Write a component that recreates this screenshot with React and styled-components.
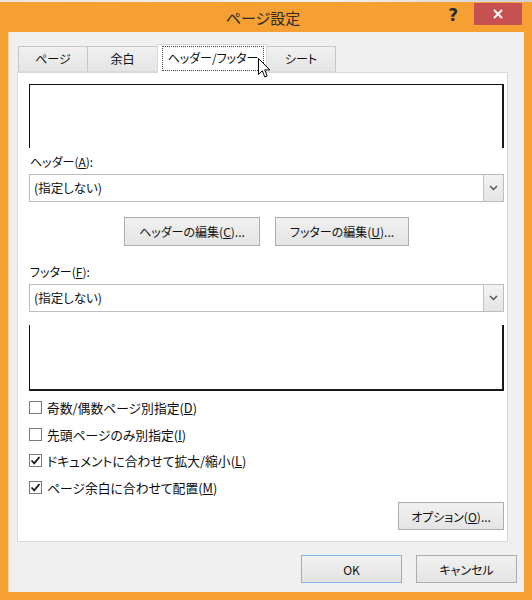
import React from 'react';
import styled, { createGlobalStyle } from 'styled-components';

const Global = createGlobalStyle`
  html, body { margin: 0; padding: 0; }
  body {
    width: 532px; height: 600px; overflow: hidden;
    background: #F6A033;
    font-family: "Noto Sans CJK JP", "Noto Sans", sans-serif;
    font-feature-settings: "palt" 1;
    color: #0d0d0d;
  }
  * { box-sizing: border-box; }
`;

const Window = styled.div`
  position: relative;
  width: 532px; height: 600px;
  background: #F6A033;
  display: flex; flex-direction: column;
`;

const TopStrip = styled.div`
  height: 2px;
  background: linear-gradient(90deg, #e6e6e6 0%, #f4f4f4 60%, #cfcfcf 100%);
`;

const TitleBar = styled.div`
  height: 30px;
  display: grid;
  grid-template-columns: 1fr auto 1fr;
  align-items: center;
`;

const Title = styled.div`
  font-size: 15px;
  line-height: 20px;
  color: #2a2a2a;
  padding-top: 1px;
  margin-right: 6px;
`;

const TitleButtons = styled.div`
  justify-self: end;
  align-self: start;
  display: flex;
  align-items: flex-start;
  gap: 16px;
  padding-right: 10px;
`;

const Help = styled.div`
  font-family: "DejaVu Sans", sans-serif;
  font-weight: bold;
  font-size: 17px;
  line-height: 20px;
  color: #2b2b2b;
  margin-top: 3px;
`;

const Close = styled.div`
  width: 48px; height: 22px;
  margin-top: 1px;
  background: #C75050;
  display: flex; align-items: center; justify-content: center;
`;

const Client = styled.div`
  flex: 1;
  margin: 0 8px 8px 8px;
  background: #F0F0F0;
  border-left: 1px solid #F9D3A0;
  padding: 12px 7px 9px 8px;
  display: flex; flex-direction: column;
`;

const TabStrip = styled.div`
  height: 28px;
  display: flex;
  align-items: flex-end;
  padding-left: 1px;
  position: relative;
  z-index: 1;
`;

const Tab = styled.div`
  width: ${p => p.$w}px;
  height: ${p => (p.$active ? 29 : 26)}px;
  margin-left: ${p => (p.$first ? 0 : -1)}px;
  margin-bottom: ${p => (p.$active ? -1 : 0)}px;
  border: 1px solid ${p => (p.$active ? '#D9D9D9' : '#C6C6C6')};
  border-bottom: ${p => (p.$active ? 'none' : '1px solid #D9D9D9')};
  background: ${p => (p.$active ? '#FFFFFF' : 'linear-gradient(#F0F0F0, #E5E5E5)')};
  position: relative;
  z-index: ${p => (p.$active ? 2 : 1)};
  font-size: 12px;
  display: flex;
  align-items: stretch;
  justify-content: center;
  padding: ${p => (p.$active ? '1px 2px 2px 4px' : '0')};
  line-height: 24px;
`;

const TabLabel = styled.span`
  flex: ${p => (p.$focus ? 1 : 'none')};
  text-align: center;
  border: 1px ${p => (p.$focus ? 'dotted #444' : 'solid transparent')};
  line-height: 22px;
`;

const Panel = styled.div`
  width: 491px;
  height: 470px;
  border: 1px solid #D9D9D9;
  background: #FFFFFF;
  padding: 11px 3px 0 11px;
  display: flex; flex-direction: column;
`;

const HeaderPreview = styled.div`
  height: 64px;
  border-top: 1px solid #111;
  border-left: 1px solid #111;
  border-right: 2px solid #1a1a1a;
`;

const FooterPreview = styled.div`
  height: 66px;
  margin-top: 13px;
  border-left: 1px solid #111;
  border-right: 2px solid #1a1a1a;
  border-bottom: 2px solid #1a1a1a;
`;

const Label = styled.div`
  margin-top: ${p => p.$mt}px;
  font-size: 12px;
  line-height: 16px;
  padding-left: 1px;
`;

const Combo = styled.div`
  margin-top: 4px;
  height: 28px;
  border: 1px solid #BDBDBD;
  display: flex;
  align-items: stretch;
  background: #fff;
`;

const ComboText = styled.div`
  flex: 1;
  padding-left: 4px;
  font-size: 12.5px;
  line-height: 26px;
`;

const DropButton = styled.div`
  width: 20px;
  border-left: 1px solid #C4C4C4;
  background: linear-gradient(#F2F2F2, #E4E4E4);
  display: flex; align-items: center; justify-content: center;
`;

const ButtonRow = styled.div`
  margin-top: 15px;
  display: flex;
  justify-content: center;
  gap: 15px;
`;

const Button = styled.div`
  width: ${p => p.$w}px;
  height: ${p => p.$h || 28}px;
  border: 1px solid ${p => (p.$default ? '#7EB4EA' : '#ADADAD')};
  background: linear-gradient(#F1F1F1, #E4E4E4);
  font-size: 12px;
  display: flex; align-items: center; justify-content: center;
  color: #111;
  ${p => p.$right && 'align-self: flex-end;'}
  ${p => p.$mt !== undefined && `margin-top: ${p.$mt}px;`}
`;

const CheckList = styled.div`
  margin-top: 3.5px;
  display: flex; flex-direction: column;
`;

const CheckRow = styled.div`
  height: 26.5px;
  display: flex;
  align-items: center;
  gap: 5px;
  font-size: 12.8px;
`;

const Box = styled.div`
  width: 13px; height: 13px;
  border: 1px solid #7A7A7A;
  background: #fff;
  display: flex; align-items: center; justify-content: center;
`;

const Footer = styled.div`
  margin-top: 13px;
  display: flex;
  justify-content: flex-end;
  gap: 14px;
`;

const Cursor = styled.svg`
  position: absolute;
  left: 258px;
  top: 58px;
  z-index: 10;
`;

const Chevron = () => (
  <svg width="9" height="6" viewBox="0 0 9 6">
    <polyline points="1,1 4.5,4.5 8,1" fill="none" stroke="#505050" strokeWidth="1.4" />
  </svg>
);

const Check = ({ checked }) => (
  <Box>
    {checked && (
      <svg width="11" height="11" viewBox="0 0 11 11">
        <polyline points="1.5,5.5 4.2,8.3 9.5,2" fill="none" stroke="#1a1a1a" strokeWidth="1.8" />
      </svg>
    )}
  </Box>
);

const tabs = [
  { label: 'ページ', w: 70 },
  { label: '余白', w: 71 },
  { label: 'ヘッダー/フッター', w: 110, active: true },
  { label: 'シート', w: 70 },
];

const checks = [
  { pre: '奇数/偶数ページ別指定(', key: 'D', checked: false },
  { pre: '先頭ページのみ別指定(', key: 'I', checked: false },
  { pre: 'ドキュメントに合わせて拡大/縮小(', key: 'L', checked: true },
  { pre: 'ページ余白に合わせて配置(', key: 'M', checked: true },
];

export default function App() {
  return (
    <>
      <Global />
      <Window>
        <TopStrip />
        <TitleBar>
          <div />
          <Title>ページ設定</Title>
          <TitleButtons>
            <Help>?</Help>
            <Close>
              <svg width="10" height="10" viewBox="0 0 10 10">
                <path d="M1 1 L9 9 M9 1 L1 9" stroke="#fff" strokeWidth="2" />
              </svg>
            </Close>
          </TitleButtons>
        </TitleBar>
        <Client>
          <TabStrip>
            {tabs.map((t, i) => (
              <Tab key={t.label} $w={t.w} $active={t.active} $first={i === 0}>
                <TabLabel $focus={t.active}>{t.label}</TabLabel>
              </Tab>
            ))}
          </TabStrip>
          <Panel>
            <HeaderPreview />
            <Label $mt={6}>ヘッダー(<u>A</u>):</Label>
            <Combo>
              <ComboText>(指定しない)</ComboText>
              <DropButton><Chevron /></DropButton>
            </Combo>
            <ButtonRow>
              <Button $w={136} $h={29}>ヘッダーの編集(<u>C</u>)...</Button>
              <Button $w={134} $h={29}>フッターの編集(<u>U</u>)...</Button>
            </ButtonRow>
            <Label $mt={18}>フッター(<u>F</u>):</Label>
            <Combo>
              <ComboText>(指定しない)</ComboText>
              <DropButton><Chevron /></DropButton>
            </Combo>
            <FooterPreview />
            <CheckList>
              {checks.map(c => (
                <CheckRow key={c.key}>
                  <Check checked={c.checked} />
                  <span>{c.pre}<u>{c.key}</u>)</span>
                </CheckRow>
              ))}
            </CheckList>
            <Button $w={106} $right $mt={1.5}>オプション(<u>O</u>)...</Button>
          </Panel>
          <Footer>
            <Button $w={101} $default>OK</Button>
            <Button $w={101}>キャンセル</Button>
          </Footer>
        </Client>
        <Cursor width="13" height="21" viewBox="0 0 13 21">
          <path d="M0.5 0.5 L0.5 16.5 L4.3 12.8 L6.8 19 L9.2 18 L6.7 11.9 L11.8 11.9 Z"
            fill="#fff" stroke="#000" strokeWidth="1" strokeLinejoin="miter" />
        </Cursor>
      </Window>
    </>
  );
}
